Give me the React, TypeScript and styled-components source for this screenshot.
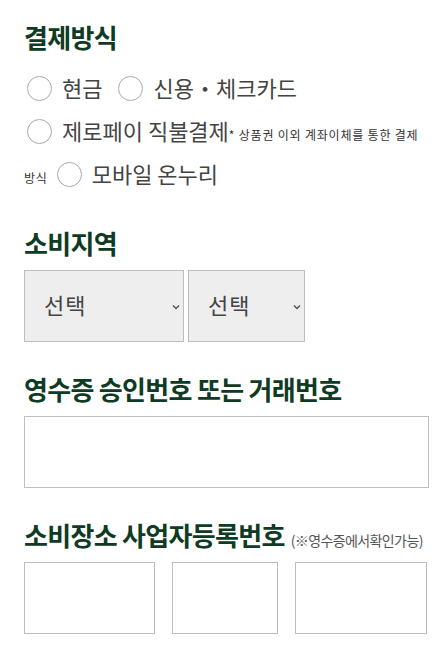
import React from "react";
import styled, { createGlobalStyle } from "styled-components";

const GlobalStyle = createGlobalStyle`
  html, body { margin: 0; padding: 0; background: #ffffff; }
  body { font-family: "Noto Sans CJK KR", "Noto Sans", sans-serif; }
  * { box-sizing: border-box; }
`;

const Page = styled.div`
  padding: 21px 17px 0 24px;
  width: 446px;
`;

const Section = styled.section<{ $after?: number }>`
  margin-bottom: ${(p) => p.$after ?? 31}px;
`;

const Heading = styled.h2<{ $gap?: number }>`
  margin: 0 0 ${(p) => p.$gap ?? 11}px;
  font-size: 26px;
  font-weight: 700;
  line-height: 32px;
  color: #0f3a24;
  letter-spacing: -0.7px;
  white-space: nowrap;
`;

const HeadingNote = styled.span`
  font-size: 14px;
  line-height: 1;
  font-weight: 400;
  color: #555;
  letter-spacing: -0.6px;
  margin-left: 6px;
`;

const RadioGroup = styled.div`
  font-size: 22px;
  line-height: 43px;
  color: #444;
`;

const RadioLabel = styled.label<{ $after?: number }>`
  display: inline;
  margin-right: ${(p) => p.$after ?? 14}px;
  cursor: pointer;
`;

const Radio = styled.input.attrs({ type: "radio" })`
  appearance: none;
  -webkit-appearance: none;
  display: inline-block;
  width: 25px;
  height: 25px;
  margin: 0 10px 0 3px;
  border: 1px solid #a9a9a9;
  border-radius: 50%;
  background: #fff;
  vertical-align: middle;
  position: relative;
  top: -3px;
  &:checked {
    box-shadow: inset 0 0 0 6px #fff;
    background: #0f3a24;
  }
`;

const Note = styled.span`
  font-size: 12px;
  line-height: 1;
  color: #333;
  letter-spacing: 0.8px;
`;

const SelectRow = styled.div`
  display: flex;
  gap: 4px;
`;

const SelectBox = styled.div<{ $w: number }>`
  position: relative;
  width: ${(p) => p.$w}px;
`;

const Select = styled.select`
  appearance: none;
  -webkit-appearance: none;
  width: 100%;
  height: 72px;
  margin: 0;
  padding: 0 0 4px 19px;
  border: 1px solid #bdbdbd;
  border-radius: 0;
  background: #eeeeee;
  font-family: inherit;
  font-size: 22px;
  letter-spacing: 1px;
  color: #444;
  outline: none;
`;

const Chevron = styled.svg`
  position: absolute;
  right: 4px;
  top: 50%;
  width: 8px;
  height: 6px;
  margin-top: -2px;
  pointer-events: none;
`;

const TextInput = styled.input<{ $w: number }>`
  display: block;
  width: ${(p) => p.$w}px;
  height: 72px;
  margin: 0;
  padding: 0 12px;
  border: 1px solid #bdbdbd;
  border-radius: 0;
  background: #fff;
  font-family: inherit;
  font-size: 18px;
  color: #333;
  outline: none;
`;

const InputRow = styled.div`
  display: flex;
  gap: 17px;
`;

const Arrow = () => (
  <Chevron viewBox="0 0 8 6">
    <path d="M1 1.5 L4 4.5 L7 1.5" fill="none" stroke="#555" strokeWidth="1.5" />
  </Chevron>
);

export default function App() {
  return (
    <>
      <GlobalStyle />
      <Page>
        <Section $after={32}>
          <Heading $gap={13}>결제방식</Heading>
          <RadioGroup>
            <RadioLabel $after={13}>
              <Radio name="pay" />현금
            </RadioLabel>
            <RadioLabel>
              <Radio name="pay" />신용・체크카드
            </RadioLabel>
            <br />
            <RadioLabel $after={6}>
              <Radio name="pay" />제로페이 직불결제
              <Note>* 상품권 이외 계좌이체를 통한 결제 방식</Note>
            </RadioLabel>
            <RadioLabel>
              <Radio name="pay" />모바일 온누리
            </RadioLabel>
          </RadioGroup>
        </Section>

        <Section>
          <Heading>소비지역</Heading>
          <SelectRow>
            <SelectBox $w={160}>
              <Select defaultValue="">
                <option value="">선택</option>
              </Select>
              <Arrow />
            </SelectBox>
            <SelectBox $w={117}>
              <Select defaultValue="">
                <option value="">선택</option>
              </Select>
              <Arrow />
            </SelectBox>
          </SelectRow>
        </Section>

        <Section>
          <Heading>영수증 승인번호 또는 거래번호</Heading>
          <TextInput $w={405} />
        </Section>

        <Section>
          <Heading>
            소비장소 사업자등록번호<HeadingNote>(※영수증에서확인가능)</HeadingNote>
          </Heading>
          <InputRow>
            <TextInput $w={131} />
            <TextInput $w={106} />
            <TextInput $w={132} />
          </InputRow>
        </Section>
      </Page>
    </>
  );
}
